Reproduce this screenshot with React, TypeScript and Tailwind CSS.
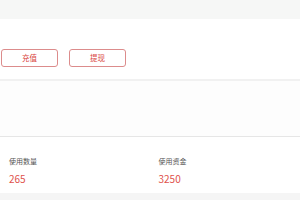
export default function App() {
  return (
    <div className="w-[300px] h-[200px] bg-[#f7f7f7] flex flex-col overflow-hidden" style={{ fontFamily: '"Noto Sans CJK SC", "Liberation Sans", sans-serif' }}>
      <div className="h-[19px] bg-[#f6f7f6]" />
      <div className="h-[60px] bg-white flex items-start gap-[11px] pl-[1px] pt-[30px]">
        <button className="w-[57px] h-[18px] rounded-[3px] border border-[#dc8c8c] text-[7.5px] text-[#d9463f] leading-none">充值</button>
        <button className="w-[57px] h-[18px] rounded-[3px] border border-[#dc8c8c] text-[7.5px] text-[#d9463f] leading-none">提现</button>
      </div>
      <div className="h-[2px] bg-[#f1f1f1]" />
      <div className="h-[56px] bg-[#fdfdfd] border-b border-[#e6e6e6]" />
      <div className="h-[56px] bg-white grid grid-cols-2 pl-[9px] pt-[20px]">
        <div className="flex flex-col gap-[7px]">
          <div className="text-[7px] leading-[9px] text-[#555]">使用数量</div>
          <div className="text-[10px] leading-[12px] text-[#e0524c]">265</div>
        </div>
        <div className="flex flex-col gap-[7px] pl-[4px]">
          <div className="text-[7px] leading-[9px] text-[#555]">使用资金</div>
          <div className="text-[10px] leading-[12px] text-[#e0524c]">3250</div>
        </div>
      </div>
      <div className="flex-1 bg-[#f5f5f5]" />
    </div>
  )
}
